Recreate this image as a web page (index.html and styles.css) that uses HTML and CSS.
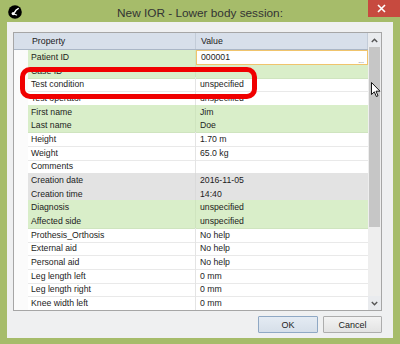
FILE: index.html
```html
<!DOCTYPE html>
<html lang="en">
    <head>
        <meta charset="UTF-8" />
        <title>New IOR - Lower body session</title>
        <link rel="stylesheet" href="styles.css">
    </head>
    <body>
        <!-- DIALOG WINDOW -->
        <div class="window">
            <div class="title-bar">
                <svg class="app-icon" width="14" height="14" viewBox="0 0 14 14">
                    <circle cx="7" cy="7" r="6.8" fill="#000"/>
                    <path d="M10.2 3.6 C8.6 4.2 7.4 5.6 6.6 7.4" stroke="#fff" stroke-width="1.5" fill="none" stroke-linecap="round"/>
                    <circle cx="5.2" cy="8.6" r="1.6" fill="#fff"/>
                    <path d="M6.4 9.2 L8.6 10" stroke="#fff" stroke-width="1.2" stroke-linecap="round"/>
                </svg>
                <span class="title">New IOR - Lower body session:</span>
                <span class="close">
                    <svg width="9" height="9" viewBox="0 0 9 9">
                        <path d="M1 1 L8 8 M8 1 L1 8" stroke="#fff" stroke-width="1.6"/>
                    </svg>
                </span>
            </div>

            <div class="client">
                <div class="grid-box">
                    <div class="rows">
                        <div class="row header">
                            <span class="mark"></span>
                            <span class="prop">Property</span>
                            <span class="value">Value</span>
                        </div>
                        <div class="row green-prop">
                            <span class="mark"></span>
                            <span class="prop">Patient ID</span>
                            <span class="value editing">000001<span class="dots">...</span></span>
                        </div>
                        <div class="row green">
                            <span class="mark"></span>
                            <span class="prop">Case ID</span>
                            <span class="value"></span>
                        </div>
                        <div class="row">
                            <span class="mark"></span>
                            <span class="prop">Test condition</span>
                            <span class="value">unspecified</span>
                        </div>
                        <div class="row">
                            <span class="mark"></span>
                            <span class="prop">Test operator</span>
                            <span class="value">unspecified</span>
                        </div>
                        <div class="row green">
                            <span class="mark"></span>
                            <span class="prop">First name</span>
                            <span class="value">Jim</span>
                        </div>
                        <div class="row green">
                            <span class="mark"></span>
                            <span class="prop">Last name</span>
                            <span class="value">Doe</span>
                        </div>
                        <div class="row">
                            <span class="mark"></span>
                            <span class="prop">Height</span>
                            <span class="value">1.70 m</span>
                        </div>
                        <div class="row">
                            <span class="mark"></span>
                            <span class="prop">Weight</span>
                            <span class="value">65.0 kg</span>
                        </div>
                        <div class="row">
                            <span class="mark"></span>
                            <span class="prop">Comments</span>
                            <span class="value"></span>
                        </div>
                        <div class="row grey">
                            <span class="mark"></span>
                            <span class="prop">Creation date</span>
                            <span class="value">2016-11-05</span>
                        </div>
                        <div class="row grey">
                            <span class="mark"></span>
                            <span class="prop">Creation time</span>
                            <span class="value">14:40</span>
                        </div>
                        <div class="row green">
                            <span class="mark"></span>
                            <span class="prop">Diagnosis</span>
                            <span class="value">unspecified</span>
                        </div>
                        <div class="row green">
                            <span class="mark"></span>
                            <span class="prop">Affected side</span>
                            <span class="value">unspecified</span>
                        </div>
                        <div class="row">
                            <span class="mark"></span>
                            <span class="prop">Prothesis_Orthosis</span>
                            <span class="value">No help</span>
                        </div>
                        <div class="row">
                            <span class="mark"></span>
                            <span class="prop">External aid</span>
                            <span class="value">No help</span>
                        </div>
                        <div class="row">
                            <span class="mark"></span>
                            <span class="prop">Personal aid</span>
                            <span class="value">No help</span>
                        </div>
                        <div class="row">
                            <span class="mark"></span>
                            <span class="prop">Leg length left</span>
                            <span class="value">0 mm</span>
                        </div>
                        <div class="row">
                            <span class="mark"></span>
                            <span class="prop">Leg length right</span>
                            <span class="value">0 mm</span>
                        </div>
                        <div class="row">
                            <span class="mark"></span>
                            <span class="prop">Knee width left</span>
                            <span class="value">0 mm</span>
                        </div>
                    </div>

                    <div class="scrollbar">
                        <span class="arrow">
                            <svg width="7" height="5" viewBox="0 0 7 5"><path d="M0.8 4 L3.5 1.2 L6.2 4" stroke="#555" stroke-width="1.4" fill="none"/></svg>
                        </span>
                        <div class="track"><div class="thumb"></div></div>
                        <span class="arrow">
                            <svg width="7" height="5" viewBox="0 0 7 5"><path d="M0.8 1 L3.5 3.8 L6.2 1" stroke="#555" stroke-width="1.4" fill="none"/></svg>
                        </span>
                    </div>
                </div>

                <div class="buttons">
                    <button class="btn btn-ok">OK</button>
                    <button class="btn">Cancel</button>
                </div>
            </div>

            <!-- red highlight drawn over the grid -->
            <div class="highlight"></div>

            <svg class="pointer" width="10" height="16" viewBox="0 0 10 16">
                <path d="M0.5 0.5 L0.5 12.5 L3.3 9.8 L5.3 14.5 L7 13.8 L5 9.2 L9 9.2 Z" fill="#fff" stroke="#000" stroke-width="0.9" stroke-linejoin="round"/>
            </svg>
        </div>
    </body>
</html>
```

FILE: styles.css
```css
/* DIALOG "NEW IOR" */
* {
    box-sizing: border-box;
    margin: 0;
    padding: 0;
}

body {
    width: 400px;
    height: 344px;
    overflow: hidden;
    font-family: "Liberation Sans", Arial, sans-serif;
    background: #a6bc6a;
}

.window {
    position: relative;
    display: flex;
    flex-direction: column;
    width: 400px;
    height: 344px;
}

.title-bar {
    display: grid;
    grid-template-columns: 1fr auto 1fr;
    height: 22px;
}

.app-icon {
    margin: 5px 0 0 8px;
}

.title {
    padding-top: 6px;
    font-size: 11.8px;
    color: #333;
    white-space: nowrap;
}

.close {
    display: flex;
    align-items: center;
    justify-content: center;
    justify-self: end;
    width: 32px;
    height: 17px;
    padding-right: 6px;
    background: #c74a3f;
}

.client {
    display: flex;
    flex-direction: column;
    flex: 1;
    margin: 0 7px 6px 7px;
    padding: 10px 11px 5px 6px;
    background: #eff0f1;
}

.grid-box {
    display: flex;
    width: 369px;
    height: 279px;
    background: #fff;
    border: 1px solid #a6a6a6;
}

.rows {
    width: 354px;
    height: 277px;
    overflow: hidden;
}

.row {
    display: grid;
    grid-template-columns: 14px 168px 172px;
    height: 13.67px;
    font-size: 8.7px;
    line-height: 14px;
    color: #1c1c1c;
}

.row .prop,
.row .value {
    white-space: nowrap;
    border-bottom: 1px solid #e9e9e9;
}

.row .prop {
    padding-left: 3px;
    border-right: 1px solid #e4e4e4;
}

.row .value {
    padding-left: 4px;
}

.mark {
    background: #fbfbfb;
}

.header {
    height: 17px;
    line-height: 16px;
    font-size: 8.8px;
    color: #222;
    background: #d7dfea;
    border-bottom: 1px solid #aab6c6;
}

.header .mark {
    background: #d7dfea;
}

.header .prop,
.header .value {
    border-bottom: none;
    border-right: 1px solid #c3ccd8;
}

.header .prop {
    padding-left: 4px;
}

.header .value {
    padding-left: 5px;
}

.green .prop,
.green .value,
.green-prop .prop {
    background: #d9eec9;
    border-color: #cfe4bf;
}

.grey .prop,
.grey .value {
    background: #e3e3e3;
    border-color: #dadada;
}

.editing {
    position: relative;
    border: 1px solid #f0c46c !important;
    line-height: 12px;
}

.dots {
    position: absolute;
    right: 3px;
    bottom: 0;
    font-size: 7px;
    line-height: 7px;
    color: #666;
}

.scrollbar {
    display: flex;
    flex-direction: column;
    width: 13px;
    background: #e9ebee;
}

.arrow {
    display: flex;
    align-items: center;
    justify-content: center;
    height: 14px;
}

.track {
    flex: 1;
    padding: 0 1px;
    background: #eeeeee;
}

.thumb {
    height: 180px;
    background: #c6c6c6;
}

.buttons {
    display: flex;
    justify-content: flex-end;
    gap: 5px;
    margin-top: 5px;
}

.btn {
    width: 59px;
    height: 17px;
    font-family: "Liberation Sans", Arial, sans-serif;
    font-size: 9px;
    color: #222;
    background: linear-gradient(#f3f3f3, #e3e3e3);
    border: 1px solid #adadad;
    border-radius: 1px;
}

.btn-ok {
    width: 60px;
    background: linear-gradient(#e4ebf3, #d6dfe9);
    border-color: #8fa8c4;
}

.highlight {
    position: absolute;
    left: 20px;
    top: 67px;
    width: 237px;
    height: 32px;
    border: 5px solid #f00000;
    border-radius: 10px;
}

.pointer {
    position: absolute;
    left: 371px;
    top: 82px;
}
```
